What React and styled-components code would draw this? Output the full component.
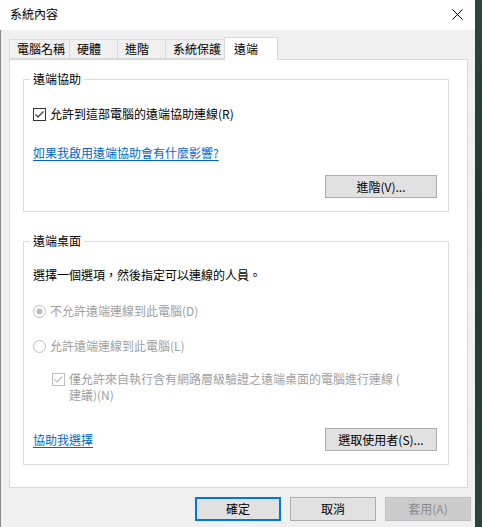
import React from 'react';
import styled, { createGlobalStyle } from 'styled-components';

// ===== GLOBAL =====
const GlobalStyle = createGlobalStyle`
  html, body {
    margin: 0;
    padding: 0;
    background: #23403a;
  }
  body {
    font-family: "Noto Sans CJK TC", "Noto Sans", "Liberation Sans", sans-serif;
    font-size: 12px;
    color: #000;
  }
`;

// ===== LAYOUT =====
const Screen = styled.div`
  display: flex;
  width: 482px;
  height: 527px;
  overflow: hidden;
`;

const Window = styled.div`
  width: 475px;
  display: flex;
  flex-direction: column;
  background: #f0f0f0;
`;

const Desktop = styled.div`
  flex: 1;
  background: linear-gradient(180deg, #2a4640 0%, #1f3a34 40%, #27443d 100%);
`;

const TitleBar = styled.div`
  height: 30px;
  flex: none;
  background: #fff;
  display: flex;
  align-items: center;
  justify-content: space-between;
  padding-left: 10px;
`;

const Title = styled.span`
  font-size: 12px;
  line-height: 16px;
  margin-top: -2px;
`;

const CloseBox = styled.div`
  width: 30px;
  height: 30px;
  margin-right: 3px;
  display: flex;
  align-items: center;
  justify-content: center;
  margin-top: -2px;
`;

const Body = styled.div`
  flex: 1;
  display: flex;
  flex-direction: column;
  padding: 7px 7px 0 8px;
  border-left: 1px solid #8a8a8a;
`;

// ===== TABS =====
const TabStrip = styled.div`
  height: 22px;
  display: flex;
  align-items: flex-end;
  padding-left: 1px;
  position: relative;
  z-index: 1;
`;

const Tab = styled.div`
  box-sizing: border-box;
  width: ${p => p.$w}px;
  height: ${p => (p.$active ? 23 : 20)}px;
  margin: ${p => (p.$active ? '0 -2px -1px -2px' : '0 0 0 -1px')};
  padding-left: ${p => (p.$active ? 9 : 7)}px;
  padding-top: ${p => (p.$active ? 3 : 1)}px;
  background: ${p => (p.$active ? '#fff' : '#f0f0f0')};
  border: 1px solid #d9d9d9;
  border-bottom: ${p => (p.$active ? 'none' : '1px solid #d9d9d9')};
  line-height: 16px;
  white-space: nowrap;
  z-index: ${p => (p.$active ? 2 : 0)};
`;

const Panel = styled.div`
  box-sizing: border-box;
  height: 429px;
  background: #fff;
  border: 1px solid #d9d9d9;
  padding: 19px 18px 19px 13px;
  display: flex;
  flex-direction: column;
  gap: 29px;
`;

// ===== GROUP BOX =====
const Group = styled.div`
  position: relative;
  border: 1px solid #dcdcdc;
  padding: ${p => p.$pt}px 11px 13px 9px;
  display: flex;
  flex-direction: column;
`;

const GroupLabel = styled.span`
  position: absolute;
  top: -9px;
  left: 6px;
  padding: 0 3px;
  background: #fff;
  line-height: 16px;
`;

const Row = styled.div`
  display: flex;
  align-items: ${p => p.$top ? 'flex-start' : 'center'};
  gap: 4px;
  min-height: 16px;
  margin-top: ${p => p.$mt || 0}px;
  padding-left: ${p => p.$indent || 0}px;
  line-height: 16px;
  color: ${p => (p.$disabled ? '#a0a0a0' : '#000')};
`;

const Text = styled.span`
  line-height: 16px;
`;

const Link = styled.span`
  color: #0066cc;
  text-decoration: underline;
  text-underline-offset: 2px;
  line-height: 16px;
`;

const ButtonRow = styled.div`
  display: flex;
  align-items: center;
  justify-content: ${p => p.$between ? 'space-between' : 'flex-end'};
  margin-top: ${p => p.$mt || 0}px;
`;

const Button = styled.div`
  box-sizing: border-box;
  width: ${p => p.$w || 112}px;
  height: ${p => p.$h || 23}px;
  display: flex;
  align-items: center;
  justify-content: center;
  background: ${p => (p.$disabled ? '#cccccc' : '#e1e1e1')};
  border: ${p => (p.$default ? '2px solid #0078d7' : p.$disabled ? '1px solid #bfbfbf' : '1px solid #adadad')};
  color: ${p => (p.$disabled ? '#8a8a8a' : '#000')};
  line-height: 16px;
`;

const Footer = styled.div`
  display: flex;
  justify-content: flex-end;
  gap: 9px;
  padding-top: 9px;
  margin-right: -3px;
`;

const BoxIcon = styled.svg`
  flex: none;
  display: block;
`;

const CheckHolder = styled.span`
  flex: none;
  padding-top: 2px;
`;

// ===== ICONS =====
function CheckBox({ disabled }) {
  const c = disabled ? '#bcbcbc' : '#333333';
  return (
    <BoxIcon width="13" height="13" viewBox="0 0 13 13">
      <rect x="0.5" y="0.5" width="12" height="12" fill="#fff" stroke={c} />
      <path d="M2.5 6.5 L5 9 L10.5 3.5" fill="none" stroke={c} strokeWidth="1.2" />
    </BoxIcon>
  );
}

function Radio({ checked }) {
  return (
    <BoxIcon width="13" height="13" viewBox="0 0 13 13">
      <circle cx="6.5" cy="6.5" r="6" fill="#fff" stroke="#bcbcbc" />
      {checked && <circle cx="6.5" cy="6.5" r="3" fill="#bcbcbc" />}
    </BoxIcon>
  );
}

function CloseIcon() {
  return (
    <BoxIcon width="11" height="11" viewBox="0 0 11 11">
      <path d="M0.5 0.5 L10.5 10.5 M10.5 0.5 L0.5 10.5" stroke="#000" strokeWidth="1" />
    </BoxIcon>
  );
}

const tabs = [
  { label: '電腦名稱', w: 61 },
  { label: '硬體', w: 49 },
  { label: '進階', w: 49 },
  { label: '系統保護', w: 61 },
  { label: '遠端', w: 54, active: true },
];

// ===== MAIN COMPONENT =====
export default function App() {
  return (
    <>
      <GlobalStyle />
      <Screen>
        <Window>
          <TitleBar>
            <Title>系統內容</Title>
            <CloseBox><CloseIcon /></CloseBox>
          </TitleBar>

          <Body>
            <TabStrip>
              {tabs.map(t => (
                <Tab key={t.label} $w={t.w} $active={t.active}>{t.label}</Tab>
              ))}
            </TabStrip>

            <Panel>
              {/* REMOTE ASSISTANCE */}
              <Group $pt={26}>
                <GroupLabel>遠端協助</GroupLabel>
                <Row>
                  <CheckBox />
                  <Text>允許到這部電腦的遠端協助連線(R)</Text>
                </Row>
                <Row $mt={23}>
                  <Link>如果我啟用遠端協助會有什麼影響?</Link>
                </Row>
                <ButtonRow $mt={14}>
                  <Button>進階(V)...</Button>
                </ButtonRow>
              </Group>

              {/* REMOTE DESKTOP */}
              <Group $pt={25}>
                <GroupLabel>遠端桌面</GroupLabel>
                <Row>
                  <Text>選擇一個選項，然後指定可以連線的人員。</Text>
                </Row>
                <Row $mt={20} $disabled>
                  <Radio checked />
                  <Text>不允許遠端連線到此電腦(D)</Text>
                </Row>
                <Row $mt={19} $disabled>
                  <Radio />
                  <Text>允許遠端連線到此電腦(L)</Text>
                </Row>
                <Row $mt={17} $indent={19} $disabled $top>
                  <CheckHolder><CheckBox disabled /></CheckHolder>
                  <Text>僅允許來自執行含有網路層級驗證之遠端桌面的電腦進行連線 (<br />建議)(N)</Text>
                </Row>
                <ButtonRow $mt={25} $between>
                  <Link>協助我選擇</Link>
                  <Button>選取使用者(S)...</Button>
                </ButtonRow>
              </Group>
            </Panel>

            <Footer>
              <Button $w={86} $h={24} $default>確定</Button>
              <Button $w={86} $h={24}>取消</Button>
              <Button $w={86} $h={24} $disabled>套用(A)</Button>
            </Footer>
          </Body>
        </Window>
        <Desktop />
      </Screen>
    </>
  );
}
